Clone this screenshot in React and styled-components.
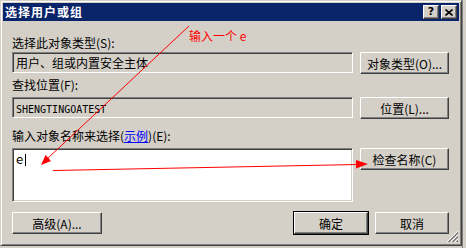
import React from "react";
import styled, { createGlobalStyle, css } from "styled-components";

const GlobalStyle = createGlobalStyle`
  html, body {
    margin: 0;
    padding: 0;
    background: #d4d0c8;
  }
  body {
    font-family: "Noto Sans CJK SC", "Noto Sans", sans-serif;
    font-size: 12px;
    color: #000;
  }
`;

const Page = styled.div`
  display: flex;
  width: 466px;
  height: 248px;
  overflow: hidden;
`;

const Window = styled.div`
  position: relative;
  box-sizing: border-box;
  width: 462px;
  height: 246px;
  padding: 1px;
  background: #d4d0c8;
  border: 1px solid;
  border-color: #d4d0c8 #404040 #404040 #d4d0c8;
  box-shadow: inset 1px 1px #ffffff, inset -1px -1px #808080;
  display: flex;
  flex-direction: column;
`;

const BehindEdge = styled.div`
  flex: 1;
  border-left: 1px solid #808080;
  background: #d4d0c8;
`;

const TitleBar = styled.div`
  height: 18px;
  margin: 1px 1px 0 1px;
  background: #0a246a;
  display: flex;
  align-items: center;
  padding: 0 2px 0 2px;
`;

const Title = styled.div`
  flex: 1;
  color: #fff;
  font-weight: bold;
  font-size: 12px;
  letter-spacing: 1px;
  line-height: 18px;
`;

const raised = css`
  box-sizing: border-box;
  background: #d4d0c8;
  border: 1px solid;
  border-color: #ffffff #404040 #404040 #ffffff;
  box-shadow: inset -1px -1px #808080;
`;

const CaptionButton = styled.div`
  ${raised};
  width: 16px;
  height: 14px;
  margin-left: ${(p) => (p.$gap ? "2px" : "0")};
  display: flex;
  align-items: center;
  justify-content: center;
  font-family: "DejaVu Sans", sans-serif;
  font-weight: bold;
  font-size: 11px;
  line-height: 12px;
`;

const Client = styled.div`
  flex: 1;
  display: flex;
  flex-direction: column;
  padding: 15px 11px 0 10px;
`;

const Label = styled.div`
  height: 14px;
  line-height: 14px;
  margin-top: ${(p) => p.$top || 0}px;
  margin-bottom: ${(p) => p.$bottom || 0}px;
  white-space: nowrap;
`;

const Link = styled.span`
  color: #0000ff;
  text-decoration: underline;
`;

const Row = styled.div`
  display: flex;
  align-items: flex-start;
  gap: 7px;
`;

const Field = styled.div`
  box-sizing: border-box;
  flex: 1;
  height: ${(p) => p.$height || 21}px;
  background: ${(p) => (p.$white ? "#ffffff" : "#d4d0c8")};
  border: 1px solid;
  border-color: #808080 #ffffff #ffffff #808080;
  box-shadow: inset 1px 1px #404040, inset -1px -1px #d4d0c8;
  padding: 2px 3px;
  line-height: 15px;
  white-space: nowrap;
`;

const MonoText = styled.span`
  font-family: "DejaVu Sans Mono", monospace;
  font-size: 10px;
`;

const TypedText = styled.span`
  font-size: 13px;
`;

const Caret = styled.span`
  display: inline-block;
  width: 1px;
  height: 12px;
  margin-left: 2px;
  background: #000;
  vertical-align: -2px;
`;

const Button = styled.div`
  ${raised};
  width: ${(p) => p.$w || 89}px;
  height: 22px;
  display: flex;
  align-items: center;
  justify-content: center;
  white-space: nowrap;
  ${(p) =>
    p.$default &&
    css`
      box-shadow: inset -1px -1px #808080, 0 0 0 1px #000;
    `}
`;

const BottomRow = styled.div`
  display: flex;
  gap: 7px;
  margin-top: 10px;
`;

const Spacer = styled.div`
  flex: 1;
`;

const Grip = styled.svg`
  position: absolute;
  right: 2px;
  bottom: 2px;
`;

const Annotation = styled.svg`
  position: absolute;
  left: 0;
  top: 0;
  pointer-events: none;
`;

const Note = styled.div`
  position: absolute;
  left: 188px;
  top: 28px;
  color: #ff0000;
  font-size: 12px;
  line-height: 14px;
  white-space: nowrap;
`;

export default function App() {
  return (
    <>
      <GlobalStyle />
      <Page>
        <Window>
          <TitleBar>
            <Title>选择用户或组</Title>
            <CaptionButton>?</CaptionButton>
            <CaptionButton $gap>
              <svg width="8" height="7" viewBox="0 0 8 7">
                <path d="M0.5 0.5 L7.5 6.5 M7.5 0.5 L0.5 6.5" stroke="#000" strokeWidth="1.6" />
              </svg>
            </CaptionButton>
          </TitleBar>
          <Client>
            <Label $bottom={2}>选择此对象类型(S):</Label>
            <Row>
              <Field>用户、组或内置安全主体</Field>
              <Button>对象类型(O)...</Button>
            </Row>
            <Label $top={4} $bottom={5}>查找位置(F):</Label>
            <Row>
              <Field>
                <MonoText>SHENGTINGOATEST</MonoText>
              </Field>
              <Button>位置(L)...</Button>
            </Row>
            <Label $top={10} $bottom={5}>
              输入对象名称来选择(<Link>示例</Link>)(E):
            </Label>
            <Row>
              <Field $white $height={54}>
                <TypedText>e</TypedText>
                <Caret />
              </Field>
              <Button>检查名称(C)</Button>
            </Row>
            <BottomRow>
              <Button $w={90}>高级(A)...</Button>
              <Spacer />
              <Button $w={74} $default>
                确定
              </Button>
              <Button $w={74}>取消</Button>
            </BottomRow>
          </Client>
          <Grip width="12" height="12" viewBox="0 0 12 12">
            <path d="M11 1 L1 11 M11 5 L5 11 M11 9 L9 11" stroke="#808080" strokeWidth="1" />
            <path d="M11 2 L2 11 M11 6 L6 11 M11 10 L10 11" stroke="#808080" strokeWidth="1" />
            <path d="M11 0 L0 11 M11 4 L4 11 M11 8 L8 11" stroke="#ffffff" strokeWidth="1" />
          </Grip>
          <Annotation width="462" height="246" viewBox="0 0 462 246">
            <line x1="188" y1="25" x2="46" y2="158" stroke="#ff0000" strokeWidth="1" />
            <polygon points="40,164 50,160 44.6,154" fill="#ff0000" />
            <line x1="52" y1="169.5" x2="357" y2="163.5" stroke="#ff0000" strokeWidth="1.2" />
            <polygon points="367,163 355,159 355,167.5" fill="#ff0000" />
          </Annotation>
          <Note>输入一个 e</Note>
        </Window>
        <BehindEdge />
      </Page>
    </>
  );
}
